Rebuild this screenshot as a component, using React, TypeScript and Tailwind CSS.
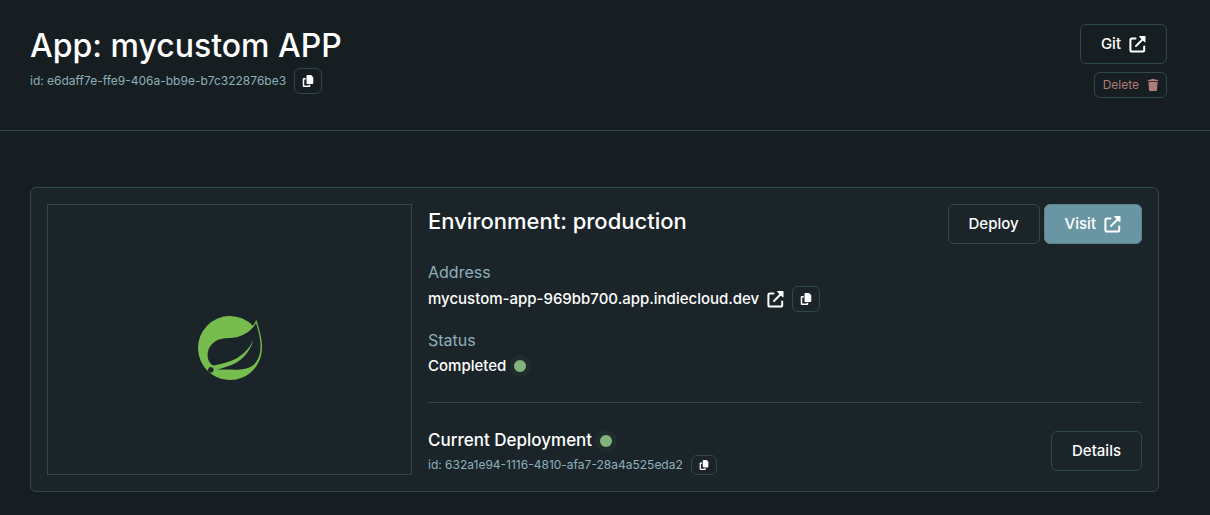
import React from "react";
import { FaCopy, FaTrash } from "react-icons/fa6";
import { SiSpring } from "react-icons/si";

function ExternalIcon() {
  return (
    <svg viewBox="0 0 17 17" className="size-[17px] shrink-0" fill="none" aria-hidden="true">
      <path
        d="M6.5 2.6H3a1.6 1.6 0 0 0-1.6 1.6V14A1.6 1.6 0 0 0 3 15.6h10.6a1.6 1.6 0 0 0 1.6-1.6v-3.6"
        stroke="currentColor"
        strokeWidth="2"
        strokeLinecap="round"
      />
      <path d="M7 10 13.5 3.5" stroke="currentColor" strokeWidth="2" strokeLinecap="round" />
      <path
        d="M10.8.6h5.1v5.1z"
        fill="currentColor"
        stroke="currentColor"
        strokeWidth="1.2"
        strokeLinejoin="round"
      />
    </svg>
  );
}

function CopyButton({ label, className }: { label: string; className: string }) {
  return (
    <button
      type="button"
      aria-label={label}
      className={`flex shrink-0 items-center justify-center rounded-md border border-[#2f484e] text-white ${className}`}
    >
      <FaCopy aria-hidden="true" />
    </button>
  );
}

function StatusDot() {
  return <span className="size-3 shrink-0 rounded-full bg-[#82b37c] ring-[5px] ring-[#82b37c]/5" />;
}

const buttonBase = "flex h-10 items-center rounded-md border px-5 text-[15px] text-white";

export default function App() {
  return (
    <div className="min-h-screen bg-[#161e21] font-['Inter',sans-serif] font-medium text-white">
      <header className="flex items-start justify-between border-b border-[#2f484e] pt-6 pr-[43px] pb-8 pl-[30px]">
        <div>
          <h1 className="text-[32px] leading-[44px] font-medium">App: mycustom APP</h1>
          <div className="flex items-center gap-2 text-[#8db0bb]">
            <p className="text-xs font-normal">id: e6daff7e-ffe9-406a-bb9e-b7c322876be3</p>
            <CopyButton label="Copy app id" className="h-[26px] w-7 text-xs" />
          </div>
        </div>
        <div className="flex flex-col items-end gap-2">
          <a href="#git" className={`${buttonBase} gap-2 border-[#2f484e]`}>
            Git
            <ExternalIcon />
          </a>
          <button
            type="button"
            className="flex h-[26px] items-center gap-2 rounded-md border border-[#2f484e] pr-[7px] pl-2 text-xs font-normal text-[#b07c7a]"
          >
            Delete
            <FaTrash className="size-3" aria-hidden="true" />
          </button>
        </div>
      </header>

      <main className="pt-14 pr-[51px] pb-5 pl-[30px]">
        <section className="flex gap-4 rounded-md border border-[#2f484e] bg-[#1b2529] p-4">
          <div className="flex w-[365px] shrink-0 items-center justify-center border border-[#2f484e] pt-4">
            <SiSpring className="size-16 text-[#77bc4f]" aria-label="Spring" />
          </div>
          <div className="min-w-0 flex-1">
            <div className="flex items-start justify-between">
              <h2 className="text-[22px] leading-[34px] font-medium">Environment: production</h2>
              <div className="flex gap-1">
                <button type="button" className={`${buttonBase} border-[#2f484e]`}>
                  Deploy
                </button>
                <a href="#visit" className={`${buttonBase} gap-2 border-[#5d8590] bg-[#6a96a3]`}>
                  Visit
                  <ExternalIcon />
                </a>
              </div>
            </div>
            <dl className="pt-4 text-[15px]">
              <dt className="text-base leading-6 font-normal text-[#8db0bb]">Address</dt>
              <dd className="flex h-[30px] items-center gap-2">
                <a href="#address" className="flex items-center gap-2">
                  mycustom-app-969bb700.app.indiecloud.dev
                  <ExternalIcon />
                </a>
                <CopyButton label="Copy address" className="h-[26px] w-7 text-xs" />
              </dd>
              <dt className="mt-3.5 text-base leading-6 font-normal text-[#8db0bb]">Status</dt>
              <dd className="flex h-7 items-center gap-2">
                Completed
                <StatusDot />
              </dd>
            </dl>
            <div className="mt-[22px] flex items-start justify-between border-t border-[#2f484e] pt-[26px]">
              <div>
                <h3 className="flex h-6 items-center gap-2 text-[17px] font-medium">
                  Current Deployment
                  <StatusDot />
                </h3>
                <div className="mt-0.5 flex items-center gap-2 text-[#8db0bb]">
                  <p className="text-xs font-normal">id: 632a1e94-1116-4810-afa7-28a4a525eda2</p>
                  <CopyButton label="Copy deployment id" className="h-5 w-[26px] text-[10px]" />
                </div>
              </div>
              <button type="button" className={`${buttonBase} mt-0.5 border-[#2f484e]`}>
                Details
              </button>
            </div>
          </div>
        </section>
      </main>
    </div>
  );
}
